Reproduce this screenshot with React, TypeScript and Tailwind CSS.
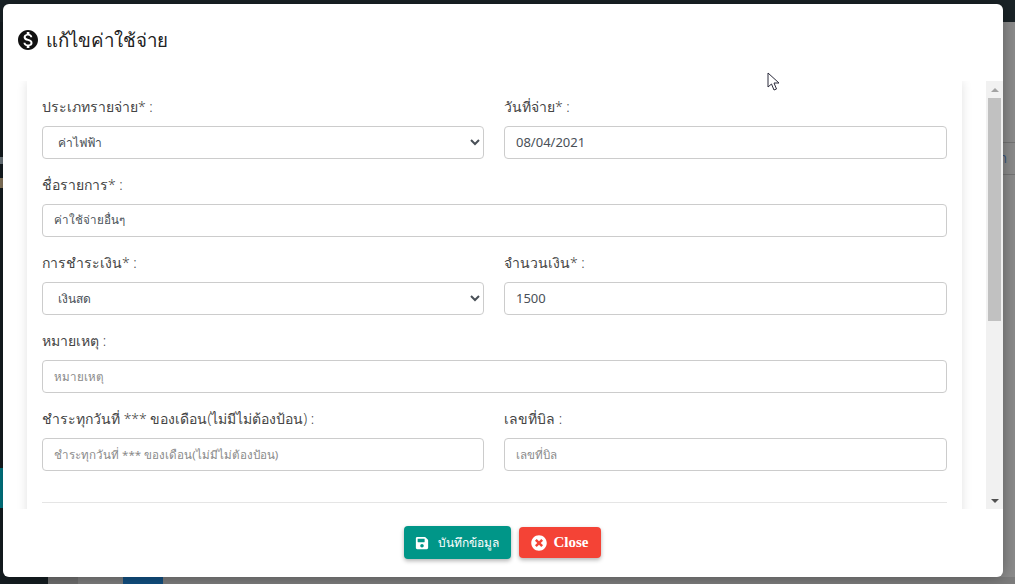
import { FaSave, FaTimesCircle } from "react-icons/fa";
import { MdMonetizationOn } from "react-icons/md";

const labelCls = "block h-6 mb-2 pt-px text-[14px] font-light leading-6 text-[#444444]";
const inputCls =
  "block w-full h-[33px] rounded border border-[#cccccc] bg-white px-[11px] pb-px text-[11.6px] text-[#495057] placeholder:text-[#8a8a8a] outline-none";
const selectCls =
  "block w-full h-[33px] rounded border border-[#cccccc] bg-white pl-[11px] pr-2 text-[12px] text-[#495057] outline-none";

function Field({ label, children }: { label: string; children: React.ReactNode }) {
  return (
    <div className="mb-[13px] min-w-0">
      <label className={labelCls}>{label}</label>
      {children}
    </div>
  );
}

export default function App() {
  return (
    <div className="relative w-[1015px] h-[584px] overflow-hidden bg-[#8c8c8c] font-['Noto_Sans','Inter',sans-serif]">
      {/* page behind the dialog */}
      <div className="h-[22px] bg-[#1a2327]" />
      <div className="flex h-[562px]">
        <aside className="w-[48px] bg-[#151d21] pt-[135px]">
          <div className="w-[3px] h-[7px] bg-[#6f7a80]" />
          <div className="w-[3px] h-[10px] mt-[14px] bg-[#8a7a60]" />
          <div className="h-[40px] mt-[280px] bg-[#007a87]" />
        </aside>
        <div className="flex-1 flex flex-col">
          <div className="h-[121px] border-b border-[#757575]" />
          <div className="h-[32px] border-b border-[#757575] flex items-center justify-end pr-[8px] text-[13px] text-[#35527a]">
            ก
          </div>
          <div className="flex-1" />
          <div className="flex h-[7px] bg-[#7d7d7d]">
            <div className="w-[30px] bg-[#6e6e6e]" />
            <div className="w-[45px]" />
            <div className="w-[40px] bg-[#124f80]" />
          </div>
        </div>
      </div>

      {/* dialog */}
      <div className="absolute left-[3px] top-[4px] w-[1000px] h-[573px] flex flex-col rounded-md bg-white shadow-[0_0_16px_rgba(0,0,0,0.35)]">
        <div className="h-[77px] shrink-0 flex items-start pl-[13px] pt-[24px] gap-[6px]">
          <MdMonetizationOn className="text-[24px] text-[#111111]" />
          <h4 className="pt-[1px] text-[18.7px] font-light leading-[21px] text-[#222222]">แก้ไขค่าใช้จ่าย</h4>
        </div>

        <div className="h-[428px] shrink-0 flex overflow-hidden">
          <div className="flex-1 pl-[24px] pr-[24px]">
            <div className="h-[600px] bg-white shadow-[0_0_10px_rgba(0,0,0,0.12)] px-[15px] pt-[13px]">
              <div className="grid grid-cols-[442px_1fr] gap-x-[20px]">
                <Field label="ประเภทรายจ่าย* :">
                  <select className={selectCls} defaultValue="ค่าไฟฟ้า">
                    <option>ค่าไฟฟ้า</option>
                  </select>
                </Field>
                <Field label="วันที่จ่าย* :">
                  <input className={inputCls + " text-[13px]"} defaultValue="08/04/2021" />
                </Field>
                <div className="col-span-2">
                  <Field label="ชื่อรายการ* :">
                    <input className={inputCls} defaultValue="ค่าใช้จ่ายอื่นๆ" />
                  </Field>
                </div>
                <Field label="การชำระเงิน* :">
                  <select className={selectCls} defaultValue="เงินสด">
                    <option>เงินสด</option>
                  </select>
                </Field>
                <Field label="จำนวนเงิน* :">
                  <input className={inputCls + " text-[13px]"} defaultValue="1500" />
                </Field>
                <div className="col-span-2">
                  <Field label="หมายเหตุ :">
                    <input className={inputCls} placeholder="หมายเหตุ" />
                  </Field>
                </div>
                <Field label="ชำระทุกวันที่ *** ของเดือน(ไม่มีไม่ต้องป้อน) :">
                  <input className={inputCls} placeholder="ชำระทุกวันที่ *** ของเดือน(ไม่มีไม่ต้องป้อน)" />
                </Field>
                <Field label="เลขที่บิล :">
                  <input className={inputCls} placeholder="เลขที่บิล" />
                </Field>
              </div>
              <hr className="mt-[18px] border-[#e5e5e5]" />
            </div>
          </div>
          {/* scrollbar */}
          <div className="w-[17px] shrink-0 flex flex-col items-center bg-[#f1f1f1]">
            <div className="h-[17px] flex items-center justify-center">
              <div className="w-0 h-0 border-x-[4px] border-x-transparent border-b-[4px] border-b-[#a3a3a3]" />
            </div>
            <div className="w-[13px] h-[223px] bg-[#c1c1c1]" />
            <div className="flex-1" />
            <div className="h-[17px] flex items-center justify-center">
              <div className="w-0 h-0 border-x-[4px] border-x-transparent border-t-[4px] border-t-[#505050]" />
            </div>
          </div>
        </div>

        <div className="flex-1 flex items-start justify-center gap-[8px] pt-[17px] pr-[2px]">
          <button className="flex items-center gap-[9px] h-[33px] w-[107px] justify-center rounded bg-[#009688] text-[12px] text-white shadow-[0_2px_4px_rgba(0,0,0,0.3)]">
            <FaSave className="text-[14px]" />
            บันทึกข้อมูล
          </button>
          <button className="mt-px flex items-center gap-[7px] h-[31px] w-[82px] justify-center rounded bg-[#f44336] text-[15px] font-bold font-['Liberation_Serif',serif] text-white shadow-[0_2px_4px_rgba(0,0,0,0.3)]">
            <FaTimesCircle className="text-[16px]" />
            Close
          </button>
        </div>
      </div>

      {/* mouse pointer */}
      <svg className="absolute left-[767px] top-[72px]" width="14" height="20" viewBox="0 0 14 20">
        <path d="M1 1 L1 15 L4.5 12 L7 18 L9.5 17 L7 11 L12 11 Z" fill="#ffffff" stroke="#2a2a3a" strokeWidth="1" />
      </svg>
    </div>
  );
}
